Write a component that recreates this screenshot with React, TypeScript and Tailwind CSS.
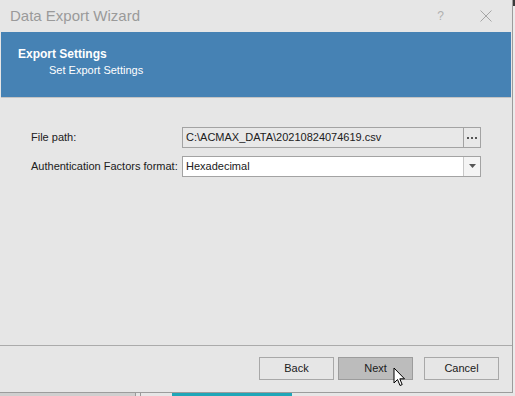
import React from 'react'

const font = { fontFamily: '"Liberation Sans", Arial, sans-serif' }

const Cursor = () => (
  <svg className="absolute left-[393px] top-[367px]" width="14" height="21" viewBox="0 0 14 21">
    <path
      d="M1 1 L1 16 L4.5 12.5 L7 18.5 L9.2 17.6 L6.8 11.8 L11.5 11.8 Z"
      fill="#ffffff"
      stroke="#000000"
      strokeWidth="1"
      strokeLinejoin="miter"
    />
  </svg>
)

export default function App() {
  return (
    <div className="relative flex h-[396px] w-[515px] flex-col overflow-hidden bg-[#e6e6e6]" style={font}>
      <div className="flex h-[393px] w-[515px]">
        <div className="flex w-[513px] flex-col border-r border-b border-[#9c9c9c] bg-[#e6e6e6]">
          {/* title bar */}
          <div className="flex h-[32px] items-center pl-[10px] pr-[20px]">
            <span className="text-[15px] text-[#9a9a9a]">Data Export Wizard</span>
            <span className="ml-auto mr-[36px] text-[12px] text-[#b0b0b0]">?</span>
            <svg width="12" height="12" viewBox="0 0 12 12">
              <path d="M0.5 0.5 L11.5 11.5 M11.5 0.5 L0.5 11.5" stroke="#a6a6a6" strokeWidth="1" />
            </svg>
          </div>

          {/* header */}
          <div className="mx-[1px] flex h-[65px] flex-col bg-[#4682b4] pl-[17px] pt-[15px] text-white">
            <span className="text-[12px] font-bold leading-[15px]">Export Settings</span>
            <span className="pl-[31px] text-[11px] leading-[16px]">Set Export Settings</span>
          </div>
          <div className="mx-[1px] h-[1px] bg-[#c4c4c4]" />

          {/* fields */}
          <div className="flex flex-1 flex-col gap-[8px] pt-[29px] pl-[31px] text-[11px] text-[#202020]">
            <div className="flex h-[21px] items-center">
              <span className="w-[151px]">File path:</span>
              <div className="flex h-[21px] w-[299px] border border-[#a3a3a3] bg-[#e8e8e8]">
                <span className="flex flex-1 items-center pl-[3px]">C:\ACMAX_DATA\20210824074619.csv</span>
                <div className="flex w-[17px] items-center justify-center gap-[2px] border-l border-[#a3a3a3]">
                  <span className="h-[2px] w-[2px] bg-[#555555]" />
                  <span className="h-[2px] w-[2px] bg-[#555555]" />
                  <span className="h-[2px] w-[2px] bg-[#555555]" />
                </div>
              </div>
            </div>
            <div className="flex h-[21px] items-center">
              <span className="w-[151px]">Authentication Factors format:</span>
              <div className="flex h-[21px] w-[299px] border border-[#a3a3a3] bg-white">
                <span className="flex flex-1 items-center pl-[3px]">Hexadecimal</span>
                <div className="flex w-[17px] items-center justify-center border-l border-[#c8c8c8] bg-[#f4f4f4]">
                  <svg width="7" height="5" viewBox="0 0 7 5">
                    <path d="M0 0 H7 L3.5 4 Z" fill="#555555" />
                  </svg>
                </div>
              </div>
            </div>
          </div>

          {/* separator + buttons */}
          <div className="h-[1px] bg-[#ababab]" />
          <div className="flex h-[46px] items-start gap-[4px] pt-[11px] pl-[259px] text-[11px] text-[#202020]">
            <button className="flex h-[23px] w-[75px] items-center justify-center border border-[#a8a8a8] bg-[#e6e6e6]">Back</button>
            <button className="flex h-[23px] w-[75px] items-center justify-center border border-[#9c9c9c] bg-[#bcbcbc]">Next</button>
            <button className="ml-[7px] flex h-[23px] w-[75px] items-center justify-center border border-[#a8a8a8] bg-[#e6e6e6]">Cancel</button>
          </div>
        </div>
        <div className="flex w-[2px] flex-col">
          <div className="h-[6px] bg-[#3a3a3a]" />
          <div className="flex-1 bg-[#ebebeb]" />
        </div>
      </div>

      {/* taskbar strip behind */}
      <div className="flex h-[3px]">
        <div className="w-[135px] bg-[#cfcfcf]" />
        <div className="w-[1px] bg-[#9a9a9a]" />
        <div className="w-[4px] bg-[#e6e6e6]" />
        <div className="w-[1px] bg-[#9a9a9a]" />
        <div className="w-[31px] bg-[#e6e6e6]" />
        <div className="w-[120px] bg-[#1fa6b8]" />
        <div className="flex-1 bg-[#e6e6e6]" />
      </div>

      <Cursor />
    </div>
  )
}
